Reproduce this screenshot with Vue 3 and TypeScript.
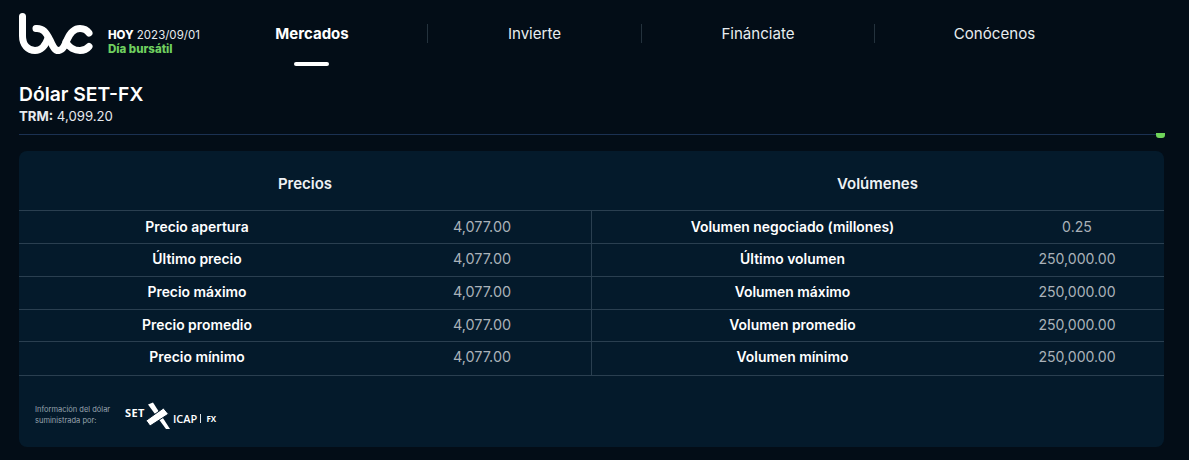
<script setup lang="ts">
const nav = [
  { label: 'Mercados', active: true },
  { label: 'Invierte', active: false },
  { label: 'Fin\u00e1nciate', active: false },
  { label: 'Con\u00f3cenos', active: false },
]
const left = [
  ['Precio apertura', '4,077.00'],
  ['Último precio', '4,077.00'],
  ['Precio máximo', '4,077.00'],
  ['Precio promedio', '4,077.00'],
  ['Precio mínimo', '4,077.00'],
]
const right = [
  ['Volumen negociado (millones)', '0.25'],
  ['Último volumen', '250,000.00'],
  ['Volumen máximo', '250,000.00'],
  ['Volumen promedio', '250,000.00'],
  ['Volumen mínimo', '250,000.00'],
]
</script>

<template>
  <div class="page">
    <header class="top">
      <svg class="logo" width="74" height="44" viewBox="19 13 74 44" fill="none" stroke="#fff" stroke-width="7" stroke-linecap="round" stroke-linejoin="round">
        <path d="M22.5 16.5 V36 C22.5 45 28 50.5 35 50.5 C42 50.5 46 44 48 38" />
        <path d="M36 28.5 C43 28 46 32 50 40 C53 47 55 51 59 50.5 C63 50 65 45 67 40 C70 33 74 28.5 80 28.5 C84 28.5 87 30 89 33" />
        <path d="M66 42 C69 48 75 50.5 80 50.5 C84 50.5 87 49 89 46.5" />
      </svg>
      <div class="today">
        <div><b>HOY</b> 2023/09/01</div>
        <div class="status">Día bursátil</div>
      </div>
      <nav class="nav">
        <a v-for="n in nav" :key="n.label" class="nav-item" :class="{ active: n.active }">{{ n.label }}</a>
      </nav>
    </header>

    <section class="title">
      <h1>Dólar SET-FX</h1>
      <div class="trm"><b>TRM:</b> 4,099.20</div>
    </section>
    <div class="rule"><span class="dot"></span></div>

    <section class="card">
      <div class="heads">
        <h2>Precios</h2>
        <h2>Volúmenes</h2>
      </div>
      <div class="rows">
        <div class="col col-left">
          <div v-for="r in left" :key="r[0]" class="row">
            <span class="label">{{ r[0] }}</span><span class="value">{{ r[1] }}</span>
          </div>
        </div>
        <div class="col col-right">
          <div v-for="r in right" :key="r[0]" class="row">
            <span class="label">{{ r[0] }}</span><span class="value">{{ r[1] }}</span>
          </div>
        </div>
      </div>
      <div class="foot">
        <p>Información del dólar<br />suministrada por:</p>
        <div class="brand">
          <span class="set">SET</span>
          <svg class="mark" width="25" height="28" viewBox="145 401 25 28" fill="#fff">
            <path d="M147 403.5 L152 401.5 L169 428 L165 428 Z" />
            <path d="M145 419.5 L162.5 407 L167.5 413 L149 425 Z" stroke="#041a2b" stroke-width="1" />
          </svg>
          <span class="icap">ICAP</span><span class="bar"></span><span class="fx">FX</span>
        </div>
      </div>
    </section>
  </div>
</template>

<style>
html, body { margin: 0; background: #030d17; }
</style>

<style scoped>
.page {
  width: 1189px;
  height: 460px;
  box-sizing: border-box;
  padding: 0 25px 0 19px;
  background: #030d17;
  color: #fff;
  font-family: Inter, "Liberation Sans", sans-serif;
  overflow: hidden;
}
.top { display: flex; align-items: flex-start; height: 80px; }
.logo { margin-top: 13px; flex: none; }
.today { margin: 28px 0 0 15px; width: 88px; font-size: 11.5px; line-height: 14px; color: #e6eaee; white-space: nowrap; }
.today b { font-weight: 800; color: #fff; }
.status { color: #6fcf5f; font-weight: 800; font-size: 11.5px; }
.nav { display: grid; grid-template-columns: 231px 214px 233px 240px; margin-top: 24px; }
.nav-item { position: relative; height: 19px; line-height: 19px; text-align: center; font-size: 15.1px; color: #e8ecef; border-left: 1px solid #24323d; }
.nav-item.active { font-size: 15px; font-weight: 700; color: #fff; border-left-color: transparent; }
.nav-item.active::after { content: ""; position: absolute; left: 50%; bottom: -23px; width: 35px; height: 4px; margin-left: -18px; border-radius: 2px; background: #fff; }
.title h1 { margin: 0; font-size: 19.3px; line-height: 26px; font-weight: 600; color: #fff; padding-top: 1px; }
.trm { font-size: 13.2px; line-height: 19px; color: #e6eaee; }
.trm b { font-weight: 700; }
.rule { position: relative; height: 1px; margin-top: 8px; background: #1b3152; }
.dot { position: absolute; right: -1px; top: -1px; width: 9px; height: 5px; border-radius: 0 0 3px 3px; background: #6fd45a; }
.card { margin-top: 16px; height: 296px; border-radius: 8px; background: #041a2b; display: flex; flex-direction: column; }
.heads { display: grid; grid-template-columns: 572px 573px; height: 59px; border-bottom: 1px solid #2a3f50; box-sizing: content-box; }
.heads h2 { margin: 0; font-size: 15px; line-height: 65px; font-weight: 600; text-align: center; color: #eef1f4; }
.rows { display: grid; grid-template-columns: 572px 573px; }
.col-right { border-left: 1px solid #2a3f50; }
.row { display: grid; height: 32px; border-bottom: 1px solid #2a3f50; line-height: 30px; font-size: 13.9px; text-align: center; }
.row:first-child { line-height: 32px; }
.row:nth-child(4) { height: 31px; line-height: 30px; }
.row:nth-child(5) { height: 33px; }
.col-left .row { grid-template-columns: 356px 216px; }
.col-right .row { grid-template-columns: 401px 171px; }
.label { font-weight: 600; color: #fff; }
.value { font-size: 14.1px; color: #aab2b9; }
.col-left .value { font-size: 14.4px; padding-right: 2px; }
.col-right .value { padding-right: 3px; }
.foot { display: flex; align-items: center; padding: 26px 0 0 16px; }
.foot p { margin: 0 0 2px; width: 90px; font-size: 7.5px; line-height: 11px; color: #98a4ae; }
.brand { display: flex; align-items: center; color: #fff; font-family: "Open Sans", sans-serif; }
.set { font-size: 11px; font-weight: 700; letter-spacing: .4px; width: 21px; margin-bottom: 8px; }
.icap { font-size: 11px; font-weight: 600; margin: 4px 0 0 2px; }
.bar { width: 1px; height: 9px; margin: 4px 5px 0 3px; background: #dfe4e8; }
.fx { font-size: 8px; font-weight: 700; margin-top: 4px; }
</style>
